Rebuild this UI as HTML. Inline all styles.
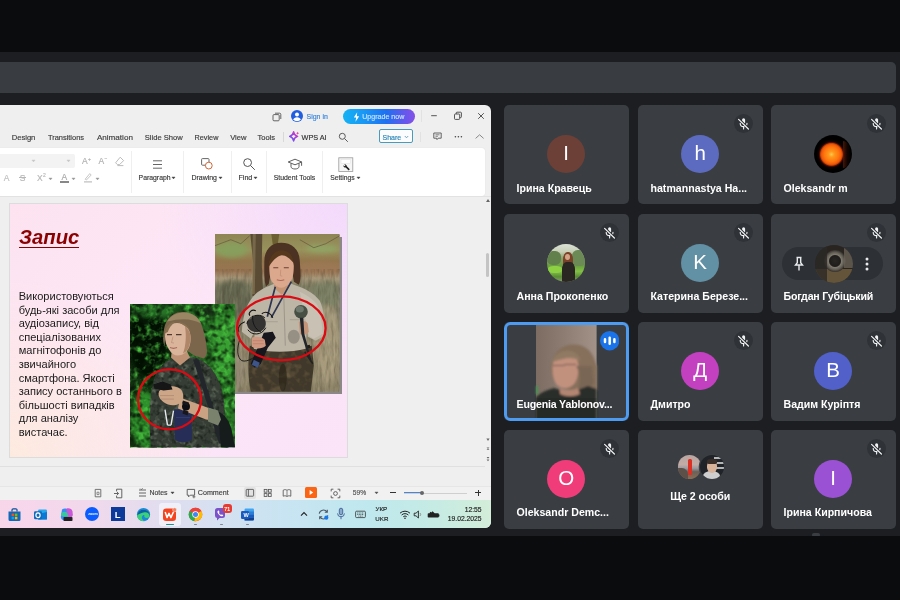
<!DOCTYPE html>
<html><head><meta charset="utf-8"><title>Meet</title>
<style>
*{box-sizing:border-box;margin:0;padding:0}
html,body{width:900px;height:600px;overflow:hidden;background:#0b0c0e;font-family:"Liberation Sans",sans-serif}
.abs,.t,.tile,svg{position:absolute}
#meet{left:0;top:52px;width:900px;height:483.5px;background:#1c1e22}
#bar{left:-10px;top:61.7px;width:906px;height:31px;background:#393d41;border-radius:5px}
.tile{will-change:transform;width:124.5px;height:99px;background:#3a3e42;border-radius:5px;overflow:hidden}
.av{position:absolute;left:43.2px;top:30px;width:38px;height:38px;border-radius:50%;color:#fff;font-size:20.5px;line-height:35.5px;text-align:center}
.nm{position:absolute;left:12.5px;top:75.7px;font-size:10.6px;line-height:13px;font-weight:bold;color:#fff;white-space:nowrap}
.mic{position:absolute;left:96px;top:9px;width:19px;height:19px}
#win{left:-6px;top:104.5px;width:496.9px;height:423px;background:#efefef;border-radius:6px;overflow:hidden}
#win .in{position:absolute;left:6px;top:-104.5px;width:900px;height:600px}
.tx{will-change:transform}
</style></head><body>
<div id="meet" class="abs"></div>
<div id="bar" class="abs"></div>
<div id="win" class="abs"><div class="in">
<div class="abs" style="left:-5px;top:147.5px;width:490px;height:48px;background:#fff;border-radius:3px;box-shadow:0 0 1px #d0d0d0"></div>
<div class="abs" style="left:-5px;top:154px;width:80px;height:13.5px;background:#f3f3f3;border-radius:2px"></div>
<svg style="left:272px;top:111.5px" width="10" height="10" viewBox="0 0 10 10"><g fill="none" stroke="#555" stroke-width=".9"><rect x="1" y="2.6" width="6.2" height="6.2" rx="1"/><path d="M3 1.2h4.6a1.2 1.2 0 0 1 1.2 1.2V7"/></g></svg>
<svg style="left:291.3px;top:110.3px" width="12" height="12" viewBox="0 0 12 12"><circle cx="6" cy="6" r="6" fill="#1f5fe0"/><circle cx="6" cy="4.6" r="2" fill="#fff"/><path d="M2.2 9.8a3.9 3.4 0 0 1 7.6 0A5.6 5.6 0 0 1 2.2 9.8z" fill="#fff"/></svg>
<div class="abs" style="left:342.5px;top:109px;width:72px;height:14.5px;border-radius:7.5px;background:linear-gradient(90deg,#14b2f4 0,#1a96f4 30%,#1e70f0 60%,#6458ec 85%,#8450e8 100%)"></div>
<svg style="left:352.5px;top:111.5px" width="7" height="10" viewBox="0 0 7 10"><path d="M4.2 .3L.8 5.4h2.3L2.5 9.7 6.2 4.3H3.8z" fill="#fff"/></svg>
<div class="abs" style="left:420.6px;top:110.0px;width:1.0px;height:12.0px;background:#e2e2e2;"></div>
<svg style="left:428px;top:110px" width="60" height="12" viewBox="0 0 60 12"><g fill="none" stroke="#444" stroke-width=".9"><path d="M3.2 5.7h5.6"/><rect x="26.5" y="4" width="5.2" height="5.4" rx=".8"/><path d="M28.2 4V3a.8.8 0 0 1 .8-.8h3.6a.8.8 0 0 1 .8.8v3.8a.8.8 0 0 1-.8.8h-.9"/><path d="M50.2 3.2l5.6 5.6M55.8 3.2l-5.6 5.6"/></g></svg>
<div class="abs" style="left:282.8px;top:131.5px;width:1.0px;height:10.0px;background:#d8d8d8;"></div>
<svg style="left:288.5px;top:131.2px" width="11" height="11" viewBox="0 0 11 11"><defs><linearGradient id="wg" x1="0" y1="1" x2="1" y2="0"><stop offset="0" stop-color="#5a5af0"/><stop offset=".55" stop-color="#a040e0"/><stop offset="1" stop-color="#f040a0"/></linearGradient></defs><path d="M4.600 .8C5 3.600 5.800 4.600 8.600 5.400 5.800 6.200 5 7.200 4.600 10 4.200 7.200 3.400 6.200 .6 5.400 3.400 4.600 4.200 3.600 4.600 .8z" fill="none" stroke="url(#wg)" stroke-width="1.500" stroke-linejoin="round"/><path d="M8.6 .6c.2 1 .5 1.4 1.6 1.7-1.1.3-1.4.7-1.6 1.7-.2-1-.5-1.4-1.6-1.7 1.1-.3 1.4-.7 1.6-1.7z" fill="#e040a0"/></svg>
<svg style="left:337.5px;top:131.5px" width="11" height="11" viewBox="0 0 11 11"><g fill="none" stroke="#5a5a5a" stroke-width="1"><circle cx="4.300" cy="4.300" r="3"/><path d="M6.600 6.600l3.200 3.200"/></g></svg>
<div class="abs" style="left:379px;top:129.3px;width:33.5px;height:14.2px;border:1px solid #4a9aba;border-radius:2px;background:#fafcfd"></div>
<svg style="left:404.2px;top:134.8px" width="5" height="4" viewBox="0 0 5 4"><path d="M.8 1L2.500 2.800 4.200 1" fill="none" stroke="#5a90b0" stroke-width=".8"/></svg>
<div class="abs" style="left:420.3px;top:131.5px;width:1.0px;height:10.0px;background:#e2e2e2;"></div>
<svg style="left:431px;top:130px" width="56" height="14" viewBox="0 0 56 14"><g fill="none" stroke="#555" stroke-width=".9"><path d="M2.8 3h7.4v5.2H7.2L6 9.6 5.6 8.2H2.8z"/><path d="M4.5 4.8h4M4.5 6.3h2.4" stroke-width=".7"/><path d="M44.6 8.4l4-3.6 4 3.6" stroke="#888" stroke-width="1"/></g><g fill="#444"><circle cx="24.4" cy="6.7" r=".8"/><circle cx="27.4" cy="6.7" r=".8"/><circle cx="30.4" cy="6.7" r=".8"/></g></svg>
<svg style="left:31.3px;top:159.0px" width="5" height="4" viewBox="0 0 5 4"><path d="M.9 1L2.5 2.900 4.100 1z" fill="#c8c8c8" stroke="#c8c8c8" stroke-width=".4" stroke-linejoin="round"/></svg>
<svg style="left:65.8px;top:159.0px" width="5" height="4" viewBox="0 0 5 4"><path d="M.9 1L2.5 2.900 4.100 1z" fill="#c8c8c8" stroke="#c8c8c8" stroke-width=".4" stroke-linejoin="round"/></svg>
<svg style="left:113.5px;top:155.5px" width="11" height="11" viewBox="0 0 11 11"><g fill="none" stroke="#b4b4b4" stroke-width=".9"><path d="M6.2 1.2l3.4 3.4-4 4H3.4L1.6 6.8z"/><path d="M3.4 9.6h6"/></g></svg>
<div class="abs" style="left:19.0px;top:177.3px;width:7.0px;height:0.8px;background:#b8b8b8;"></div>
<svg style="left:47.5px;top:176.5px" width="5" height="4" viewBox="0 0 5 4"><path d="M.9 1L2.5 2.900 4.100 1z" fill="#999" stroke="#999" stroke-width=".4" stroke-linejoin="round"/></svg>
<div class="abs" style="left:60.0px;top:181.3px;width:8.6px;height:1.6px;background:#888;"></div>
<svg style="left:70.8px;top:176.5px" width="5" height="4" viewBox="0 0 5 4"><path d="M.9 1L2.5 2.900 4.100 1z" fill="#999" stroke="#999" stroke-width=".4" stroke-linejoin="round"/></svg>
<svg style="left:82.5px;top:172px" width="11" height="11" viewBox="0 0 11 11"><g fill="none" stroke="#c0c0c0" stroke-width=".9"><path d="M2.2 7.2L6.8 1.6 8.2 3 3.4 8z"/><path d="M1 9.8h8" stroke-width="1.3"/></g></svg>
<svg style="left:94.5px;top:176.5px" width="5" height="4" viewBox="0 0 5 4"><path d="M.9 1L2.5 2.900 4.100 1z" fill="#999" stroke="#999" stroke-width=".4" stroke-linejoin="round"/></svg>
<div class="abs" style="left:131.4px;top:150.5px;width:1.0px;height:42.0px;background:#efefef;"></div>
<div class="abs" style="left:183.2px;top:150.5px;width:1.0px;height:42.0px;background:#efefef;"></div>
<div class="abs" style="left:230.5px;top:150.5px;width:1.0px;height:42.0px;background:#efefef;"></div>
<div class="abs" style="left:265.9px;top:150.5px;width:1.0px;height:42.0px;background:#efefef;"></div>
<div class="abs" style="left:322.4px;top:150.5px;width:1.0px;height:42.0px;background:#efefef;"></div>
<svg style="left:152px;top:158.5px" width="11" height="11" viewBox="0 0 11 11"><path d="M1 1.8h9M1 5.5h9M1 9.2h9" stroke="#666" stroke-width="1" fill="none"/></svg>
<svg style="left:170.9px;top:175.6px" width="5" height="4" viewBox="0 0 5 4"><path d="M.9 1L2.5 2.900 4.100 1z" fill="#444" stroke="#444" stroke-width=".4" stroke-linejoin="round"/></svg>
<svg style="left:200px;top:157px" width="14" height="14" viewBox="0 0 14 14"><g fill="none" stroke-width="1"><rect x="1.6" y="1.6" width="7.4" height="6.6" rx=".8" stroke="#666"/><circle cx="8.8" cy="8.6" r="3.4" stroke="#d06838" fill="#fff"/></g></svg>
<svg style="left:218.0px;top:175.6px" width="5" height="4" viewBox="0 0 5 4"><path d="M.9 1L2.5 2.900 4.100 1z" fill="#444" stroke="#444" stroke-width=".4" stroke-linejoin="round"/></svg>
<svg style="left:241.5px;top:157px" width="14" height="14" viewBox="0 0 14 14"><g fill="none" stroke="#555" stroke-width="1"><circle cx="5.6" cy="5.6" r="3.9"/><path d="M8.6 8.6l4.2 4.2"/></g></svg>
<svg style="left:253.0px;top:175.6px" width="5" height="4" viewBox="0 0 5 4"><path d="M.9 1L2.5 2.900 4.100 1z" fill="#444" stroke="#444" stroke-width=".4" stroke-linejoin="round"/></svg>
<svg style="left:287px;top:157.5px" width="16" height="13" viewBox="0 0 16 13"><g fill="none" stroke="#555" stroke-width=".95"><path d="M1.2 4L8 1.2 14.8 4 8 6.8z"/><path d="M4 5.4v3.4c0 1.2 1.8 2.2 4 2.2s4-1 4-2.2V5.4"/><path d="M14.6 4.2v3.6"/></g></svg>
<svg style="left:338px;top:156.5px" width="16" height="16" viewBox="0 0 16 16"><rect x=".8" y=".8" width="14" height="13.6" fill="#f6f6f6" stroke="#9a9a9a" stroke-width=".8"/><rect x="3" y="2.6" width="9.6" height="4" fill="#fff" stroke="#ddd" stroke-width=".5"/><path d="M6.2 7.4a1.9 1.9 0 0 1 2.6 1.9l3 3-1.1 1.1-3-3a1.9 1.9 0 0 1-2.3-2.2l1.2 1.1.9-.9z" fill="#222"/></svg>
<svg style="left:355.8px;top:175.6px" width="5" height="4" viewBox="0 0 5 4"><path d="M.9 1L2.5 2.900 4.100 1z" fill="#444" stroke="#444" stroke-width=".4" stroke-linejoin="round"/></svg>
<div class="abs" style="left:-5.0px;top:195.5px;width:500.0px;height:1.0px;background:#e2e2e2;"></div>
<svg style="left:484px;top:196px" width="8" height="10" viewBox="0 0 8 10"><path d="M2 6l2-3 2 3z" fill="#666"/></svg>
<div class="abs" style="left:486.0px;top:253.0px;width:3.0px;height:24.0px;background:#c4c4c4;border-radius:1.5px"></div>
<svg style="left:484px;top:435px" width="8" height="30" viewBox="0 0 8 30"><g fill="#666"><path d="M2.4 3.5h3.2L4 6z"/><path d="M2.6 12.5h2.8L4 14.3zM2.6 14.8h2.8L4 13z"/><path d="M2.6 22h2.8L4 23.8zM2.6 24.4h2.8L4 26.2z"/></g></svg>
<div class="abs" style="left:-5.0px;top:466.0px;width:490.0px;height:1.0px;background:#e0e0e0;"></div>
<svg class="tx" style="left:0;top:0" width="900" height="600"><text x="306.5" y="119.0" font-size="7.00" fill="#3a86dc" stroke="#3a86dc" stroke-width=".16">Sign in</text><text x="362.2" y="119.1" font-size="7.10" fill="#c4e2ff" stroke="#c4e2ff" stroke-width=".16">Upgrade now</text><text x="11.7" y="140.0" font-size="7.60" fill="#3c3c3c" stroke="#3c3c3c" stroke-width=".16">Design</text><text x="47.9" y="140.0" font-size="7.45" fill="#3c3c3c" stroke="#3c3c3c" stroke-width=".16">Transitions</text><text x="96.9" y="140.0" font-size="8.10" fill="#3c3c3c" stroke="#3c3c3c" stroke-width=".16">Animation</text><text x="144.8" y="140.0" font-size="7.60" fill="#3c3c3c" stroke="#3c3c3c" stroke-width=".16">Slide Show</text><text x="194.6" y="140.0" font-size="7.25" fill="#3c3c3c" stroke="#3c3c3c" stroke-width=".16">Review</text><text x="230.2" y="140.0" font-size="7.60" fill="#3c3c3c" stroke="#3c3c3c" stroke-width=".16">View</text><text x="257.5" y="140.0" font-size="7.50" fill="#3c3c3c" stroke="#3c3c3c" stroke-width=".16">Tools</text><text x="301.5" y="140.0" font-size="7.30" fill="#333" stroke="#333" stroke-width=".16">WPS AI</text><text x="382.5" y="139.6" font-size="7.00" fill="#2b86b8" stroke="#2b86b8" stroke-width=".16">Share</text><text x="82.0" y="164.0" font-size="8.50" fill="#b0b0b0" stroke="#b0b0b0" stroke-width=".16">A</text><text x="88.0" y="160.5" font-size="5.00" fill="#b0b0b0" stroke="#b0b0b0" stroke-width=".16">+</text><text x="98.5" y="164.0" font-size="8.50" fill="#b0b0b0" stroke="#b0b0b0" stroke-width=".16">A</text><text x="104.5" y="160.0" font-size="5.00" fill="#b0b0b0" stroke="#b0b0b0" stroke-width=".16">−</text><text x="3.8" y="181.0" font-size="8.50" fill="#c0c0c0" stroke="#c0c0c0" stroke-width=".16">A</text><text x="19.8" y="181.0" font-size="8.50" fill="#b8b8b8" stroke="#b8b8b8" stroke-width=".16">S</text><text x="37.0" y="181.0" font-size="8.50" fill="#b8b8b8" stroke="#b8b8b8" stroke-width=".16">X</text><text x="43.0" y="177.0" font-size="5.00" fill="#b8b8b8" stroke="#b8b8b8" stroke-width=".16">2</text><text x="61.5" y="180.0" font-size="8.50" fill="#a8a8a8" stroke="#a8a8a8" stroke-width=".16">A</text><text x="138.6" y="180.2" font-size="6.85" fill="#3a3a3a" stroke="#3a3a3a" stroke-width=".16">Paragraph</text><text x="191.5" y="180.2" font-size="6.95" fill="#3a3a3a" stroke="#3a3a3a" stroke-width=".16">Drawing</text><text x="238.5" y="180.2" font-size="7.10" fill="#3a3a3a" stroke="#3a3a3a" stroke-width=".16">Find</text><text x="273.7" y="180.2" font-size="6.90" fill="#3a3a3a" stroke="#3a3a3a" stroke-width=".16">Student Tools</text><text x="330.2" y="180.2" font-size="6.75" fill="#3a3a3a" stroke="#3a3a3a" stroke-width=".16">Settings</text></svg><div class="abs" style="left:9.6px;top:204px;width:337.6px;height:253.4px;overflow:hidden;box-shadow:0 0 0 1px #dcdcdc;background:radial-gradient(ellipse 60% 70% at 0% 100%,#fdeadf 0,rgba(253,234,223,0) 100%),radial-gradient(ellipse 55% 60% at 100% 0%,#f3dafc 0,rgba(243,218,252,0) 100%),linear-gradient(135deg,#fde3f0 0,#fde6f6 40%,#fbe5f7 70%,#fbe3f8 100%)">
</div>
<div class="abs" style="left:18.8px;top:247.0px;width:60.6px;height:1.4px;background:#8b0000;"></div>
<svg class="tx" style="left:0;top:0" width="900" height="600"><text x="19.0" y="244.0" font-size="20.25" fill="#8b0000" font-weight="bold" font-style="italic">Запис</text><text x="18.7" y="300.2" font-size="11.05" fill="#1a1a1a">Використовуються</text><text x="18.7" y="313.8" font-size="11.05" fill="#1a1a1a">будь-які засоби для</text><text x="18.7" y="327.3" font-size="11.05" fill="#1a1a1a">аудіозапису, від</text><text x="18.7" y="340.9" font-size="11.05" fill="#1a1a1a">спеціалізованих</text><text x="18.7" y="354.4" font-size="11.05" fill="#1a1a1a">магнітофонів до</text><text x="18.7" y="367.9" font-size="11.05" fill="#1a1a1a">звичайного</text><text x="18.7" y="381.5" font-size="11.05" fill="#1a1a1a">смартфона. Якості</text><text x="18.7" y="395.1" font-size="11.05" fill="#1a1a1a">запису останнього в</text><text x="18.7" y="408.6" font-size="11.05" fill="#1a1a1a">більшості випадків</text><text x="18.7" y="422.1" font-size="11.05" fill="#1a1a1a">для аналізу</text><text x="18.7" y="435.7" font-size="11.05" fill="#1a1a1a">вистачає.</text></svg><div class="abs" style="left:217.8px;top:237px;width:124.6px;height:157.3px;background:#8c8888"></div>
<svg style="left:215.2px;top:234.3px" width="124.6" height="157.5" viewBox="215.2 234.3 124.6 157.5">
<defs>
<filter id="b1" x="-20%" y="-20%" width="140%" height="140%"><feGaussianBlur stdDeviation="0.55"/></filter>
<filter id="b2" x="-30%" y="-30%" width="160%" height="160%"><feGaussianBlur stdDeviation="2.2"/></filter>
<filter id="b3" x="-30%" y="-30%" width="160%" height="160%"><feGaussianBlur stdDeviation="1.1"/></filter>
<filter id="gr" x="0" y="0" width="100%" height="100%" color-interpolation-filters="sRGB"><feTurbulence type="fractalNoise" baseFrequency="0.35 0.07" numOctaves="3" seed="4"/><feColorMatrix values="0 0 0 0 .22  0 0 0 0 .2  0 0 0 0 .13  1.4 .8 0 0 -.95"/></filter>
<filter id="gr2" x="0" y="0" width="100%" height="100%" color-interpolation-filters="sRGB"><feTurbulence type="fractalNoise" baseFrequency="0.3 0.08" numOctaves="2" seed="14"/><feColorMatrix values="0 0 0 0 .82  0 0 0 0 .78  0 0 0 0 .66  1.4 .8 0 0 -1.05"/></filter>
<filter id="cm1" x="0" y="0" width="100%" height="100%" color-interpolation-filters="sRGB"><feTurbulence type="fractalNoise" baseFrequency="0.14" numOctaves="2" seed="21"/><feColorMatrix values="0 0 0 0 .5  0 0 0 0 .43  0 0 0 0 .3  2.2 1 0 0 -1.5"/></filter>
<linearGradient id="bg1" x1="0" y1="0" x2="0" y2="1"><stop offset="0" stop-color="#8f8454"/><stop offset=".1" stop-color="#98925c"/><stop offset=".17" stop-color="#93764c"/><stop offset=".235" stop-color="#977452"/><stop offset=".28" stop-color="#a8987a"/><stop offset=".33" stop-color="#7c7c62"/><stop offset=".5" stop-color="#848068"/><stop offset=".72" stop-color="#948a70"/><stop offset="1" stop-color="#8e8468"/></linearGradient>
<clipPath id="tr"><path d="M250 346c16 4 44 4 62 0l2 20-3 26h-60c-3-14-3-32-1-46z"/></clipPath>
</defs>
<rect x="215.2" y="234.3" width="124.6" height="157.6" fill="url(#bg1)"/>
<g filter="url(#b2)">
<ellipse cx="232" cy="250" rx="16" ry="8" fill="#86a05c" opacity=".9"/>
<ellipse cx="322" cy="249" rx="16" ry="4" fill="#8ea866" opacity=".8"/>
<ellipse cx="320" cy="268" rx="22" ry="6" fill="#a07a58" opacity=".6"/>
<ellipse cx="234" cy="300" rx="18" ry="20" fill="#62634e" opacity=".85"/>
<ellipse cx="326" cy="296" rx="14" ry="14" fill="#7c8266" opacity=".8"/>
<ellipse cx="328" cy="345" rx="12" ry="40" fill="#aa9c7e" opacity=".9"/>
<ellipse cx="232" cy="372" rx="14" ry="20" fill="#948a74" opacity=".8"/>
<ellipse cx="226" cy="340" rx="8" ry="18" fill="#6e6a56" opacity=".6"/>
</g>
<rect x="215.2" y="270" width="124.6" height="122" filter="url(#gr)" opacity=".42"/>
<rect x="215.2" y="280" width="124.6" height="112" filter="url(#gr2)" opacity=".28"/>
<g filter="url(#b1)">
<path d="M250.500 234.300h12l-.500 30 1.500 32h-11l1-32z" fill="#5a4c36"/>
<path d="M253 234.300h3l-1 60h-3z" fill="#8a7a58" opacity=".6"/>
<path d="M271.500 234.300h8l-1.500 10-5 1z" fill="#6c6030"/>
<path d="M215 246l16-6 10 4 9-8M300 240l14 8 12-4 14-8" stroke="#5a4a30" stroke-width=".8" fill="none" opacity=".7"/>
<!-- trousers -->
<path d="M250 346c16 4 44 4 62 0l2 20-3 26h-60c-3-14-3-32-1-46z" fill="#40382a"/>
<g clip-path="url(#tr)"><rect x="245" y="340" width="75" height="55" filter="url(#cm1)" opacity=".6"/><ellipse cx="283" cy="378" rx="4" ry="14" fill="#2c261a" opacity=".7"/></g>
<path d="M252 345c16 4 42 4 58 0l.500 3c-16 4-42 4-58.500 0z" fill="#221e18"/>
<!-- shirt -->
<path d="M272 285c6-3 16-3 22 0 10 3 20 8 26 16 4 8 5 22 6 34l-10 6-8-4-1-10-1 22c-14 4-38 4-52 0l1-18-4 8-9-7c1-12 3-24 9-32 5-8 13-12 21-15z" fill="#bdb5a6"/>
<path d="M300 292c8 4 14 8 18 14 3 8 4 18 5 28l-9 5-5-3z" fill="#c9c2b4"/>
<path d="M284 296l1.500 50" stroke="#9a9286" stroke-width=".9" fill="none"/>
<ellipse cx="294" cy="337" rx="6" ry="7" fill="#8a8478" opacity=".75"/>
<path d="M264 322h14M290 320h14" stroke="#a39b8e" stroke-width=".8"/>
<!-- hair -->
<path d="M264.500 262c0-12 7-19 17-19s18 6 18.500 18c.500 10 2 18-1 24l-5-3-2-14h-20l-3 16-3 3c-2-8-1.500-16-1.500-25z" fill="#4c3220"/>
<!-- neck/face -->
<path d="M275 280h13l1 8-7 7-8-7z" fill="#c49474"/>
<path d="M269.500 266c0-8 5-12 12-12s12 4 12.500 12c0 8-1 13-4 17-3 3.500-6 5-8.500 5s-6-1.500-8.500-5c-3-4-3.500-9-3.500-17z" fill="#dba88e"/>
<path d="M268.500 268c1-12 6-17 13-17.500 7 0 12 5 12.500 13-4-5-8-8-12-8-5 1-9 5-13.500 12.500z" fill="#56381f"/>
<path d="M273.500 268h5M284 268h5" stroke="#6a4030" stroke-width="1.100"/>
<path d="M277 280q4 1.500 7.500 0" stroke="#b06858" stroke-width="1.100" fill="none"/>
<path d="M281 270l-.500 6 2 .5" stroke="#c08a70" stroke-width=".7" fill="none"/>
<!-- lanyard -->
<path d="M275.500 287l-8 30M291.500 282l-20 36" stroke="#2e3650" stroke-width="1.700" fill="none"/>
<!-- right hand + mic -->
<path d="M299 322c3-1 8-1 9 2l1 8c-1 3-7 4-9 2z" fill="#c49478"/>
<circle cx="301.200" cy="312" r="6.800" fill="#465044"/><ellipse cx="300" cy="309.500" rx="4" ry="3.200" fill="#6e786c"/>
<path d="M300 318h3.500l1 16 7 26h-2l-8-26z" fill="#24262a"/>
<!-- cables / camera -->
<path d="M251 319c3-4 10-5 13-1s3 10-2 13-12 1-14-4 0-6 3-8z" fill="#1c1c1c" opacity=".85"/><path d="M247 324c2-8 12-11 18-6M248 330c4 6 14 6 18-2M253 316c-1 6 2 14 8 16" stroke="#151515" stroke-width="1" fill="none"/>
<path d="M245 322c-5 2-8 6-6 10M262 314c4-3 9-1 11 4M250 316c-2-3 2-7 6-5" stroke="#151515" stroke-width="1.100" fill="none"/>
<path d="M240 340c-3 8-3 18 2 21 6 2 14-4 24-12" stroke="#1a1a1a" stroke-width=".9" fill="none"/>
<path d="M264 333l9-1 3 6-8 10-7 16-6 4-4-4 6-14z" fill="#15161a"/>
<path d="M254 360l6 3-2 5-6-3z" fill="#3c5488"/>
<path d="M252 338c4-2 10-1 13 2l1 6c-3 3-10 4-14 1z" fill="#d09880"/>
<path d="M253 341h11M253 344h11" stroke="#b87860" stroke-width=".6"/>
<path d="M305 352l8 12" stroke="#202020" stroke-width="1.600"/>
</g>
</svg>
<svg style="left:130px;top:304.400px" width="105.300" height="143.200" viewBox="130 304.400 105.300 143.200">
<defs>
<filter id="lf" x="0" y="0" width="100%" height="100%" color-interpolation-filters="sRGB"><feTurbulence type="fractalNoise" baseFrequency="0.13" numOctaves="3" seed="9"/><feColorMatrix values="0 0 0 0 .3  0 0 0 0 .78  0 0 0 0 .26  2.4 1.6 0 0 -1.9"/></filter>
<filter id="lf2" x="0" y="0" width="100%" height="100%" color-interpolation-filters="sRGB"><feTurbulence type="fractalNoise" baseFrequency="0.16" numOctaves="2" seed="3"/><feColorMatrix values="0 0 0 0 .03  0 0 0 0 .09  0 0 0 0 .03  2.4 1.4 0 0 -1.7"/></filter>
<filter id="cam" x="0" y="0" width="100%" height="100%" color-interpolation-filters="sRGB"><feTurbulence type="fractalNoise" baseFrequency="0.17" numOctaves="2" seed="12"/><feColorMatrix values="0 0 0 0 .56  0 0 0 0 .6  0 0 0 0 .52  2.6 1.2 0 0 -1.95"/></filter>
<filter id="cam2" x="0" y="0" width="100%" height="100%" color-interpolation-filters="sRGB"><feTurbulence type="fractalNoise" baseFrequency="0.2" numOctaves="2" seed="31"/><feColorMatrix values="0 0 0 0 .08  0 0 0 0 .1  0 0 0 0 .08  2.6 1.2 0 0 -1.9"/></filter>
<linearGradient id="bg2" x1="0" y1="0" x2="1" y2="0"><stop offset="0" stop-color="#12300f"/><stop offset=".3" stop-color="#143812"/><stop offset=".6" stop-color="#1f5a1c"/><stop offset="1" stop-color="#2a7a26"/></linearGradient>
<clipPath id="jk"><path d="M154 380c3-10 10-18 20-22l8-2 14 2c10 4 18 12 23 24 4 10 6 24 6 40v25.600h-74c-1-10-2-20-1-32 0-14 1-26 4-35.600z"/></clipPath>
</defs>
<rect x="130" y="304.400" width="105.300" height="143.200" fill="url(#bg2)"/>
<g filter="url(#b2)">
<ellipse cx="148" cy="342" rx="20" ry="36" fill="#040c04" opacity=".95"/>
<ellipse cx="224" cy="345" rx="12" ry="40" fill="#3cae36" opacity=".75"/>
<ellipse cx="145" cy="420" rx="14" ry="28" fill="#32a02e" opacity=".85"/>
<ellipse cx="155" cy="312" rx="20" ry="6" fill="#2c8a30" opacity=".7"/>
<ellipse cx="212" cy="312" rx="14" ry="6" fill="#0c200c" opacity=".7"/>
</g>
<rect x="130" y="304.400" width="105.300" height="143.200" filter="url(#lf)"/>
<rect x="130" y="304.400" width="105.300" height="143.200" filter="url(#lf2)" opacity=".85"/>
<g filter="url(#b1)">
<!-- jacket -->
<path d="M154 380c3-10 10-18 20-22l8-2 14 2c10 4 18 12 23 24 4 10 6 24 6 40v25.600h-74c-1-10-2-20-1-32 0-14 1-26 4-35.600z" fill="#363e36"/>
<g clip-path="url(#jk)"><rect x="130" y="350" width="105.300" height="98" filter="url(#cam)" opacity=".6"/><rect x="130" y="350" width="105.300" height="98" filter="url(#cam2)" opacity=".9"/></g>
<!-- strap/bag right -->
<path d="M193 360l8 24 18 60h6l-20-62-6-22z" fill="#20262a"/>
<path d="M218 412c6 2 12 10 14 20l3 15.600h-14z" fill="#161c1c"/>
<!-- hair -->
<path d="M163.500 338c-.5-12 4-22 14-25 10-2.500 20 2 24 12 3 9 5 17 5.500 26 0 3-1 6-3 8l-10-3-7-5-2-16-16-8c-3 3-4 8-4 14l-.5 6c-1-3-1.500-6-1.500-9z" fill="#7c664c"/>
<path d="M167 322c4-6 10-9 17-9 8 0 14 4 17 11-8-5-20-6-34-2z" fill="#9a8664"/>
<!-- face / neck -->
<path d="M172 350l14 0 4 8-10 8-9-8z" fill="#bd9274"/>
<path d="M165 337c0-8 5-13.500 12-13.500s13 5 13.500 13c.5 7-1 12-4 15.500-3 3-6 4-9 4s-6-2-8.500-6c-2.500-4-4-8-4-13z" fill="#dbb49c"/>
<path d="M185 327c3.500 3 5.500 6 5.500 10 0 7-1.500 12-4.500 15l-3 2c3-8 3.500-18 2-27z" fill="#b08668"/>
<path d="M164.800 334c1-7 5-11 10-11.500-3 3-6 6-7 10zM178 322.500c6 0 10.500 4 12.500 9-4-4-8-7-12.500-9z" fill="#86704f"/>
<path d="M167 335h5M176 335h5.500" stroke="#4e3a30" stroke-width="1.100"/>
<path d="M170 348q3.500 1.500 7 0" stroke="#a8685c" stroke-width="1.100" fill="none"/>
<path d="M173 337l-1.500 6 2.500.5" stroke="#b88a72" stroke-width=".7" fill="none"/>
<!-- pouch -->
<path d="M174 410h17.500l.5 30c-4 3.500-13 3.500-17 0z" fill="#262e58"/>
<path d="M176 418h14" stroke="#3a447a" stroke-width=".7"/>
<path d="M165 410l2.500 15.500M173.500 411l-2.500 14.500M167.500 425.500h3.500" stroke="#e6eaf0" stroke-width="1.400" fill="none"/>
<!-- forearm, cuff -->
<path d="M180 398l30 11 6 4-2 8-8-1-28-11z" fill="#c9a284"/>
<path d="M208 408l10 3 3 9-3 6-10-4z" fill="#7a826e"/>
<!-- hand, device, watch -->
<path d="M159 392c3-5 12-7 19-4 5 2 6 8 5 12-2 5-9 7-15 5-6-2-11-8-9-13z" fill="#cda688"/>
<path d="M160 396h14M161 399.500h13" stroke="#a87e64" stroke-width=".6"/>
<path d="M153.500 385l9-3 8 3 2 5-9 1-9-2z" fill="#121316"/>
<circle cx="186" cy="407" r="4" fill="#0f1012"/><path d="M183 401l6 2-1 3-6-2zM183.500 410l5 2-1 4-5-2z" fill="#16181a"/>
</g>
</svg>
<svg style="left:120px;top:285px" width="230" height="160" viewBox="120 285 230 160"><g fill="none" stroke="#dc0a12" stroke-width="2.300"><ellipse cx="281.300" cy="328.300" rx="44.300" ry="32"/><ellipse cx="169.500" cy="399.300" rx="31.500" ry="30"/></g></svg><div class="abs" style="left:-5.0px;top:485.5px;width:500.0px;height:15.0px;background:#f1f1f1;border-top:1px solid #e6e6e6"></div>
<svg style="left:93px;top:488px" width="10" height="10" viewBox="0 0 10 10"><g fill="none" stroke="#666" stroke-width=".9"><path d="M2.200 1.400h5.600v7.400H2.200z"/><path d="M4 4.200h2v2.400H4z" stroke-width=".7"/></g></svg>
<svg style="left:113px;top:487.500px" width="11" height="11" viewBox="0 0 11 11"><g fill="none" stroke="#555" stroke-width=".9"><path d="M3.600 1.200h5.200v8.600H3.600V7.600M3.600 3.400V1.200"/><path d="M1 5.500h4.400M4 4l1.600 1.500L4 7"/></g></svg>
<svg style="left:138px;top:488px" width="9" height="10" viewBox="0 0 9 10"><g fill="none" stroke="#555" stroke-width=".9"><path d="M1 2h7M1 5h7M1 8h7"/><path d="M2.200 .6l1 1 1.600-1.400" stroke-width=".7"/></g></svg>
<svg style="left:169.7px;top:491.0px" width="5" height="4" viewBox="0 0 5 4"><path d="M.9 1L2.5 2.900 4.100 1z" fill="#444" stroke="#444" stroke-width=".4" stroke-linejoin="round"/></svg>
<svg style="left:185.500px;top:487.500px" width="10" height="11" viewBox="0 0 10 11"><g fill="none" stroke="#555" stroke-width=".9"><path d="M1.200 1.400h7.400v5.800H4.200L2.600 8.800V7.200H1.200z"/><path d="M6.400 8.800h3M7.900 7.300v3" stroke-width=".8"/></g></svg>
<div class="abs" style="left:244.0px;top:487.0px;width:11.5px;height:11.5px;background:#e2e2e2;border-radius:2px"></div>
<svg style="left:245px;top:488px" width="50" height="10" viewBox="0 0 50 10"><g fill="none" stroke="#555" stroke-width=".85"><rect x="1.200" y="1.400" width="7.400" height="6.800" rx=".6"/><path d="M3.400 1.400v6.800"/><rect x="19.200" y="1.400" width="2.800" height="2.800"/><rect x="23.400" y="1.400" width="2.800" height="2.800"/><rect x="19.200" y="5.600" width="2.800" height="2.800"/><rect x="23.400" y="5.600" width="2.800" height="2.800"/><path d="M38.200 2.200c1.400-.8 2.800-.8 3.800.2 1-1 2.400-1 3.800-.2v6c-1.400-.6-2.800-.6-3.800.4-1-1-2.400-1-3.800-.4z"/><path d="M42 2.400v6" stroke-width=".7"/></g></svg>
<div class="abs" style="left:304.800px;top:487.300px;width:12px;height:11px;background:#fa6414;border-radius:1.500px"></div>
<svg style="left:304.800px;top:487.300px" width="12" height="11" viewBox="0 0 12 11"><path d="M4.600 3l3.600 2.500-3.600 2.500z" fill="#fff"/></svg>
<svg style="left:329.500px;top:487.500px" width="11" height="11" viewBox="0 0 11 11"><g fill="none" stroke="#555" stroke-width=".9"><path d="M1.200 3.400V1.200h2.200M7.600 1.200h2.200v2.200M9.800 7.600v2.200H7.600M3.400 9.800H1.200V7.600"/><circle cx="5.500" cy="5.500" r="1.900"/></g></svg>
<svg style="left:374.2px;top:491.0px" width="5" height="4" viewBox="0 0 5 4"><path d="M.9 1L2.5 2.900 4.100 1z" fill="#555" stroke="#555" stroke-width=".4" stroke-linejoin="round"/></svg>
<div class="abs" style="left:389.7px;top:492.3px;width:6.0px;height:1.1px;background:#333;"></div>
<div class="abs" style="left:404.4px;top:492.5px;width:62.3px;height:0.8px;background:#cfcfcf;"></div>
<div class="abs" style="left:404.4px;top:492.3px;width:17.0px;height:1.0px;background:#4a86d8;"></div>
<div class="abs" style="left:420.200px;top:490.800px;width:4px;height:4px;border-radius:50%;background:#666"></div>
<div class="abs" style="left:475.3px;top:492.3px;width:6.0px;height:1.1px;background:#333;"></div>
<div class="abs" style="left:477.8px;top:489.8px;width:1.1px;height:6.0px;background:#333;"></div>
<div class="abs" style="left:-5.0px;top:500.3px;width:500.0px;height:27.5px;background:linear-gradient(90deg,#f8d6ea 0,#f2d8ec 18%,#dcdff0 38%,#c8e4f2 58%,#bfe8ee 75%,#c6ebe4 88%,#d4eed8 100%);"></div>
<svg style="left:6.7px;top:506.5px" width="15" height="15" viewBox="0 0 15 15"><path d="M1.500 4.500h12v8a1.500 1.500 0 0 1-1.500 1.500H3a1.500 1.500 0 0 1-1.500-1.500z" fill="#1468b8"/><path d="M5 4.500V3a1.200 1.200 0 0 1 1.200-1.200h2.600A1.200 1.200 0 0 1 10 3v1.500" fill="none" stroke="#0c4f94" stroke-width="1.200"/><rect x="4.600" y="6.600" width="2.500" height="2.500" fill="#f25022"/><rect x="7.900" y="6.600" width="2.500" height="2.500" fill="#7fba00"/><rect x="4.600" y="9.800" width="2.500" height="2.500" fill="#00a4ef"/><rect x="7.900" y="9.800" width="2.500" height="2.500" fill="#ffb900"/></svg>
<svg style="left:32.8px;top:506.5px" width="15" height="15" viewBox="0 0 15 15"><rect x="5" y="2.500" width="9" height="10" rx="1.200" fill="#28a8ea"/><path d="M5 7l9-2v7.500H5z" fill="#0a78d4"/><rect x="1" y="4.200" width="8" height="8" rx="1.200" fill="#0f6cbd"/><ellipse cx="5" cy="8.200" rx="2.100" ry="2.400" fill="none" stroke="#fff" stroke-width="1.200"/></svg>
<svg style="left:59.2px;top:506.5px" width="15" height="15" viewBox="0 0 15 15"><path d="M3 2.500c2-1.500 5-1.500 6 1l2.500 6c.8 2-1 3.800-3 3.800H5.500c-2.500 0-4.200-2-3.500-4.500z" fill="#3a8ef0"/><path d="M7.500 1.500c2.500-.8 5.500.2 6 3l.3 3c.2 2-1.800 3.500-3.800 3.500H8z" fill="#c858d8"/><path d="M2 7c1-2.500 4-3 6-1.500l1.500 4H4.500C2.800 9.500 1.600 8.500 2 7z" fill="#38c8a0"/><rect x="4.500" y="10" width="9" height="4" rx=".8" fill="#222"/></svg>
<div class="abs" style="left:84.700px;top:506.700px;width:14.600px;height:14.600px;border-radius:50%;background:#0b5cff"></div>
<div class="abs" style="left:110.9px;top:507.0px;width:14.0px;height:14.0px;background:#0c3a9a;"></div>
<svg style="left:136.4px;top:506.5px" width="15" height="15" viewBox="0 0 15 15"><circle cx="7.500" cy="7.500" r="6.600" fill="#1a88d8"/><path d="M1.200 8.500C2 4 5 2.500 8 2.800c3.500.3 5.800 2.800 5.800 5.400 0 1.800-1.400 2.800-3 2.800-1.500 0-2.600-.8-2.600-2 0-.8.400-1.300.4-1.300-2 0-3.200 1.800-2.600 3.800.5 1.600 2 2.600 3.200 2.700C5 14.500 1 12.500 1.200 8.500z" fill="#3cd078"/><path d="M1.200 8.500C2 4 5 2.500 8 2.800c3.500.3 5.800 2.800 5.800 5.400 0 .5-.1.900-.3 1.300.3-3-2.500-4.500-5-4.200C5.500 5.600 3 7 1.200 8.500z" fill="#0c5ea8"/></svg>
<div class="abs" style="left:159.0px;top:503.0px;width:21.5px;height:23.0px;background:rgba(255,255,255,.55);border-radius:3px"></div>
<svg style="left:162.2px;top:506.5px" width="15" height="15" viewBox="0 0 15 15"><rect x="1" y="1.500" width="13" height="12.500" rx="3.200" fill="#f4431e"/><path d="M3.200 5l1.800 5.600L7 6.400l1.900 4.200L11.400 5" fill="none" stroke="#fff" stroke-width="1.500" stroke-linejoin="round"/><circle cx="12.600" cy="2.800" r="2" fill="#f08060" stroke="#fff" stroke-width=".4"/></svg>
<div class="abs" style="left:165.7px;top:524.0px;width:8.0px;height:1.3px;background:#1f8f8f;border-radius:1px"></div>
<svg style="left:187.8px;top:506.5px" width="15" height="15" viewBox="0 0 15 15"><circle cx="7.500" cy="7.500" r="6.800" fill="#e8453c"/><path d="M7.500 7.500L1.600 4.100A6.800 6.800 0 0 0 6.400 14.200z" fill="#2da94f"/><path d="M7.500 7.500L6.400 14.200A6.800 6.800 0 0 0 13.400 4.100z" fill="#fbbc05"/><path d="M1.600 4.100A6.800 6.800 0 0 1 13.400 4.100H7.500z" fill="#e8453c"/><circle cx="7.500" cy="7.500" r="3.200" fill="#fff"/><circle cx="7.500" cy="7.500" r="2.500" fill="#4285f4"/></svg>
<div class="abs" style="left:194.0px;top:524.3px;width:2.8px;height:1.0px;background:#808890;border-radius:1px"></div>
<svg style="left:213.0px;top:506.5px" width="15" height="15" viewBox="0 0 15 15"><path d="M2 3.500A2.500 2.500 0 0 1 4.500 1h5A2.500 2.500 0 0 1 12 3.500v5A2.500 2.500 0 0 1 9.500 11H6.500L4 13.500V11A2.500 2.500 0 0 1 2 8.500z" fill="#7b52c8"/><path d="M5 3.800c.4-.4.9-.2 1.100.3l.3.900c.1.400-.2.600-.4.900.4.900 1 1.500 1.900 1.900.3-.2.500-.5.900-.4l.9.300c.5.200.7.700.3 1.100-.5.600-1.200.7-2 .4C6.400 8.500 5 7.100 4.500 5.600c-.2-.7-.1-1.300.5-1.800z" fill="#fff"/></svg>
<div class="abs" style="left:222.500px;top:504.300px;width:9px;height:8.600px;border-radius:3px;background:#e83a30"></div>
<div class="abs" style="left:220.3px;top:524.3px;width:2.8px;height:1.0px;background:#808890;border-radius:1px"></div>
<svg style="left:239.8px;top:506.5px" width="15" height="15" viewBox="0 0 15 15"><rect x="4.500" y="1.500" width="9.500" height="12" rx="1.200" fill="#41a5ee"/><rect x="4.500" y="4.500" width="9.500" height="3" fill="#2b7cd3"/><rect x="4.500" y="7.500" width="9.500" height="3" fill="#185abd"/><path d="M4.500 10.500h9.500v1.800a1.200 1.200 0 0 1-1.200 1.200H4.500z" fill="#103f91"/><rect x="1" y="4" width="8" height="8" rx="1.200" fill="#185abd"/></svg>
<div class="abs" style="left:246.0px;top:524.3px;width:2.8px;height:1.0px;background:#808890;border-radius:1px"></div>
<svg style="left:299.600px;top:510.500px" width="8" height="6" viewBox="0 0 8 6"><path d="M1 4.600L4 1.600l3 3" fill="none" stroke="#222" stroke-width="1.100"/></svg>
<svg style="left:316.500px;top:507.500px" width="13" height="13" viewBox="0 0 13 13"><g fill="none" stroke="#4a5868" stroke-width="1.100"><path d="M2.200 5.600A4.300 4.300 0 0 1 10 4M10.300 1.800V4.300H7.800"/><path d="M10.800 7.400A4.300 4.300 0 0 1 3 9M2.700 11.200V8.700h2.500"/></g><circle cx="9.300" cy="9.700" r="2.100" fill="#1878e8"/></svg>
<svg style="left:336px;top:507px" width="10" height="14" viewBox="0 0 10 14"><g fill="none" stroke="#4a6a9a" stroke-width="1"><rect x="3.300" y="1.200" width="3.400" height="6.600" rx="1.700" fill="#8aa8cc"/><path d="M1.600 6.400a3.400 3.400 0 0 0 6.800 0M5 9.800v2.400"/></g></svg>
<svg style="left:354.500px;top:509.500px" width="11" height="9" viewBox="0 0 11 9"><g fill="none" stroke="#333" stroke-width=".8"><rect x=".6" y="1.200" width="9.800" height="6.400" rx="1"/><path d="M2.200 3h6.600M2.200 4.500h6.600M3.400 6.100h4.200" stroke-width=".7" stroke-dasharray="1 .6"/></g></svg>
<svg style="left:398.500px;top:508.500px" width="12" height="11" viewBox="0 0 12 11"><g fill="none" stroke="#222" stroke-width="1"><path d="M1 4.200a7.200 7.200 0 0 1 10 0M2.600 6a4.900 4.900 0 0 1 6.800 0M4.300 7.700a2.500 2.500 0 0 1 3.400 0"/></g><circle cx="6" cy="9.300" r=".8" fill="#222"/></svg>
<svg style="left:412.500px;top:508.500px" width="11" height="11" viewBox="0 0 11 11"><g fill="none" stroke="#222" stroke-width=".9"><path d="M1.200 4.200h1.800L5.400 2v7L3 6.800H1.200z"/><path d="M7 4a2.200 2.200 0 0 1 0 3" stroke="#888"/></g></svg>
<svg style="left:426.500px;top:508.500px" width="13" height="11" viewBox="0 0 13 11"><path d="M1.500 4.200h1l.8-1.400 1 .6 1.200-1.200 2.200 2h3.300a.8.800 0 0 1 .8.800v.4h.6v2h-.6v.400a.8.800 0 0 1-.8.800H1.500a.8.800 0 0 1-.8-.8V5a.8.800 0 0 1 .8-.8z" fill="#222"/></svg>
<svg class="tx" style="left:0;top:0" width="900" height="600"><text x="149.4" y="495.3" font-size="6.95" fill="#444" stroke="#444" stroke-width=".16">Notes</text><text x="197.8" y="495.3" font-size="7.15" fill="#444" stroke="#444" stroke-width=".16">Comment</text><text x="352.8" y="495.3" font-size="6.70" fill="#555" stroke="#555" stroke-width=".16">59%</text><text x="62.0" y="515.0" font-size="3.00" fill="#fff" stroke="#fff" stroke-width=".16"></text><text x="88.3" y="515.0" font-size="3.60" fill="#fff" font-weight="bold">zoom</text><text x="114.7" y="517.6" font-size="9.50" fill="#fff" font-weight="bold">L</text><text x="224.3" y="510.8" font-size="5.20" fill="#fff" stroke="#fff" stroke-width=".16">71</text><text x="243.4" y="517.0" font-size="5.60" fill="#fff" font-weight="bold">W</text><text x="375.5" y="511.3" font-size="6.20" fill="#222" stroke="#222" stroke-width=".16">УКР</text><text x="375.3" y="520.7" font-size="6.20" fill="#222" stroke="#222" stroke-width=".16">UKR</text><text x="481.6" y="511.8" font-size="6.75" fill="#222" text-anchor="end" stroke="#222" stroke-width=".16">12:55</text><text x="481.6" y="521.2" font-size="6.75" fill="#222" text-anchor="end" stroke="#222" stroke-width=".16">19.02.2025</text></svg>
</div></div>
<div class="tile" style="left:504.0px;top:105.0px;"><div class="av" style="background:#6d4037">I</div><div class="nm" style="top:76.7px">Ірина Кравець</div></div>
<div class="tile" style="left:638.0px;top:105.0px;"><div class="av" style="background:#5c6bc0">h</div><svg class="mic" viewBox="0 0 19 19"><circle cx="9.5" cy="9.5" r="9.5" fill="#2f3237"/><rect x="8.100" y="4.200" width="3" height="6" rx="1.500" fill="#f1f3f4"/><g fill="none" stroke="#f1f3f4" stroke-width="1.100" stroke-linecap="round"><path d="M6.200 9.200a3.400 3.400 0 0 0 6.800 0"/><path d="M9.600 12.800v2.200"/></g><path d="M4.300 4.600l10.300 10.200" stroke="#2c2f33" stroke-width="2.600"/><path d="M4.600 5.400l9.800 9.600" stroke="#f1f3f4" stroke-width="1.200" stroke-linecap="round"/></svg><div class="nm" style="top:76.7px">hatmannastya На...</div></div>
<div class="tile" style="left:771.3px;top:105.0px;"><div class="av" style="background:radial-gradient(circle 19px at 46% 51%,#ffc850 0,#ff9a1c 14%,#ff760e 38%,#f05a08 52%,#c63c04 58%,#5a1602 62%,#120401 68%,#000 80%)"></div><div class="abs" style="left:71.500px;top:36px;width:8px;height:27px;border-radius:0 100% 100% 0/0 50% 50% 0;background:linear-gradient(90deg,rgba(100,30,10,.7) 0,rgba(50,14,6,.35) 50%,rgba(30,8,4,0) 100%)"></div><svg class="mic" viewBox="0 0 19 19"><circle cx="9.5" cy="9.5" r="9.5" fill="#2f3237"/><rect x="8.100" y="4.200" width="3" height="6" rx="1.500" fill="#f1f3f4"/><g fill="none" stroke="#f1f3f4" stroke-width="1.100" stroke-linecap="round"><path d="M6.200 9.200a3.400 3.400 0 0 0 6.800 0"/><path d="M9.600 12.800v2.200"/></g><path d="M4.300 4.600l10.300 10.200" stroke="#2c2f33" stroke-width="2.600"/><path d="M4.600 5.400l9.800 9.600" stroke="#f1f3f4" stroke-width="1.200" stroke-linecap="round"/></svg><div class="nm" style="top:76.7px">Oleksandr m</div></div>
<div class="tile" style="left:504.0px;top:214.0px;"><div class="av" style="overflow:hidden;background:linear-gradient(180deg,#dde2d6 0,#c8d0b8 20%,#86a068 38%,#6aa040 58%,#84c048 72%,#5a8e34 86%,#8a9a70 100%)"><div class="abs" style="left:0;top:7px;width:14px;height:14px;background:#62804c;border-radius:40%"></div><div class="abs" style="left:25px;top:6px;width:14px;height:16px;background:#6c8a56;border-radius:40%"></div><div class="abs" style="left:1px;top:22px;width:14px;height:7px;background:#8ed044;border-radius:40%"></div><div class="abs" style="left:15.500px;top:7.500px;width:10px;height:17px;border-radius:45% 45% 30% 30%;background:#7a4228"></div><div class="abs" style="left:18px;top:9.500px;width:5px;height:6px;border-radius:50%;background:#d4a488"></div><div class="abs" style="left:14.500px;top:18px;width:13px;height:21px;border-radius:35% 35% 0 0;background:#2a2622"></div></div><svg class="mic" viewBox="0 0 19 19"><circle cx="9.5" cy="9.5" r="9.5" fill="#2f3237"/><rect x="8.100" y="4.200" width="3" height="6" rx="1.500" fill="#f1f3f4"/><g fill="none" stroke="#f1f3f4" stroke-width="1.100" stroke-linecap="round"><path d="M6.200 9.200a3.400 3.400 0 0 0 6.800 0"/><path d="M9.600 12.800v2.200"/></g><path d="M4.300 4.600l10.300 10.200" stroke="#2c2f33" stroke-width="2.600"/><path d="M4.600 5.400l9.800 9.600" stroke="#f1f3f4" stroke-width="1.200" stroke-linecap="round"/></svg><div class="nm">Анна Прокопенко</div></div>
<div class="tile" style="left:638.0px;top:214.0px;"><div class="av" style="background:#6290a4">K</div><svg class="mic" viewBox="0 0 19 19"><circle cx="9.5" cy="9.5" r="9.5" fill="#2f3237"/><rect x="8.100" y="4.200" width="3" height="6" rx="1.500" fill="#f1f3f4"/><g fill="none" stroke="#f1f3f4" stroke-width="1.100" stroke-linecap="round"><path d="M6.200 9.200a3.400 3.400 0 0 0 6.800 0"/><path d="M9.600 12.800v2.200"/></g><path d="M4.300 4.600l10.300 10.200" stroke="#2c2f33" stroke-width="2.600"/><path d="M4.600 5.400l9.800 9.600" stroke="#f1f3f4" stroke-width="1.200" stroke-linecap="round"/></svg><div class="nm">Катерина Березе...</div></div>
<div class="tile" style="left:771.3px;top:214.0px;"><div class="abs" style="left:10.7px;top:32.6px;width:101.5px;height:33.4px;border-radius:16.7px;background:#2d3034"></div><div class="abs" style="left:43.5px;top:30.7px;width:38px;height:38px;border-radius:50%;overflow:hidden;background:#3a322c;filter:brightness(.72)"><div class="abs" style="left:0;top:24px;width:38px;height:14px;background:#8a7450"></div><div class="abs" style="left:9px;top:5px;width:22px;height:22px;border-radius:50%;background:radial-gradient(circle,#3a3632 0,#2a2826 35%,#b0a898 42%,#8a8478 55%,#4a443e 70%)"></div><div class="abs" style="left:0;top:0;width:12px;height:38px;background:#3c3834;opacity:.8"></div><div class="abs" style="left:29px;top:3px;width:9px;height:20px;background:#9a9082;opacity:.7"></div></div><svg style="left:22.3px;top:42px" width="12" height="16" viewBox="0 0 12 16"><g fill="none" stroke="#e8eaed" stroke-width="1.4"><path d="M3.5 1.5h5M4.3 1.5v5.2L2.5 9h7L7.700 6.700V1.500M6 9v5.500"/></g></svg><svg style="left:92.700px;top:41.800px" width="6" height="16" viewBox="0 0 6 16"><g fill="#e8eaed"><circle cx="3" cy="3" r="1.500"/><circle cx="3" cy="8" r="1.500"/><circle cx="3" cy="13" r="1.500"/></g></svg><svg class="mic" viewBox="0 0 19 19"><circle cx="9.5" cy="9.5" r="9.5" fill="#2f3237"/><rect x="8.100" y="4.200" width="3" height="6" rx="1.500" fill="#f1f3f4"/><g fill="none" stroke="#f1f3f4" stroke-width="1.100" stroke-linecap="round"><path d="M6.200 9.200a3.400 3.400 0 0 0 6.800 0"/><path d="M9.600 12.800v2.200"/></g><path d="M4.300 4.600l10.300 10.200" stroke="#2c2f33" stroke-width="2.600"/><path d="M4.600 5.400l9.800 9.600" stroke="#f1f3f4" stroke-width="1.200" stroke-linecap="round"/></svg><div class="nm" style="letter-spacing:-0.17px">Богдан Губіцький</div></div>
<div class="tile" style="left:504.0px;top:322.0px;"><svg style="left:0;top:0" width="124.5" height="99" viewBox="504 322 124.5 99"><defs><linearGradient id="vw" x1="0" y1="0" x2="1" y2="0"><stop offset="0" stop-color="#7c6c62"/><stop offset=".45" stop-color="#8c7c72"/><stop offset="1" stop-color="#a29288"/></linearGradient><filter id="vb" x="-20%" y="-20%" width="140%" height="140%"><feGaussianBlur stdDeviation="1"/></filter></defs><rect x="536" y="322" width="60.600" height="99" fill="url(#vw)"/><g filter="url(#vb)"><path d="M551 372c-1-14 6-26 20-27.500 12-1 20 5 23 14l3 8v24l-12 4-20-6c-8-2-13-8-14-16.500z" fill="#86705c"/><path d="M552.500 368c0-8 4-14 10-15.500 6-1 12 1 14.500 6 2 6 2 14 0 20-2 6-6 9-11 9.500-5 0-9-2-11-6-2-4-2.500-9-2.500-14z" fill="#c2917e"/><path d="M552 362c3-8 10-12 18-11 6 1 10 5 11 10-6-3-12-4-18-2-4 1-8 2-11 3z" fill="#907a64"/><path d="M553 365.500h10l3-1h10" stroke="#5a4a44" stroke-width=".9" fill="none"/><path d="M576 366c4 6 5 14 2 22l10 4 6-10-2-16z" fill="#7a6654"/><path d="M536 397c4-4 10-7 18-9l6 2c6 2 14 2 20-1l8-3 8.600 3v32h-60.600z" fill="#2a2e2c"/><path d="M560 388c4 3 12 3 18 0l2 6c-6 3-14 3-20 0z" fill="#b48672"/><rect x="536" y="386" width="2" height="8" fill="#3a9a50"/></g><rect x="536" y="398" width="60.600" height="23" fill="#1c1e1e" opacity=".25"/></svg><div class="abs" style="left:0;top:0;width:124.5px;height:99px;border:3px solid #4e9bf2;border-radius:6.5px"></div><svg style="left:95.800px;top:9.300px" width="19.400" height="19.400" viewBox="0 0 19.400 19.400"><circle cx="9.700" cy="9.700" r="9.700" fill="#1a73e8"/><g stroke="#fff" stroke-width="2.500" stroke-linecap="round"><path d="M5 8.300v2.800M9.700 6.700v6M14.400 8.300v2.800"/></g></svg><div class="nm" style="letter-spacing:-0.17px">Eugenia Yablonov...</div></div>
<div class="tile" style="left:638.0px;top:322.0px;"><div class="av" style="background:#c341c0">Д</div><svg class="mic" viewBox="0 0 19 19"><circle cx="9.5" cy="9.5" r="9.5" fill="#2f3237"/><rect x="8.100" y="4.200" width="3" height="6" rx="1.500" fill="#f1f3f4"/><g fill="none" stroke="#f1f3f4" stroke-width="1.100" stroke-linecap="round"><path d="M6.200 9.200a3.400 3.400 0 0 0 6.800 0"/><path d="M9.600 12.800v2.200"/></g><path d="M4.300 4.600l10.300 10.200" stroke="#2c2f33" stroke-width="2.600"/><path d="M4.600 5.400l9.800 9.600" stroke="#f1f3f4" stroke-width="1.200" stroke-linecap="round"/></svg><div class="nm">Дмитро</div></div>
<div class="tile" style="left:771.3px;top:322.0px;"><div class="av" style="background:#5161c9">В</div><svg class="mic" viewBox="0 0 19 19"><circle cx="9.5" cy="9.5" r="9.5" fill="#2f3237"/><rect x="8.100" y="4.200" width="3" height="6" rx="1.500" fill="#f1f3f4"/><g fill="none" stroke="#f1f3f4" stroke-width="1.100" stroke-linecap="round"><path d="M6.200 9.200a3.400 3.400 0 0 0 6.800 0"/><path d="M9.600 12.800v2.200"/></g><path d="M4.300 4.600l10.300 10.200" stroke="#2c2f33" stroke-width="2.600"/><path d="M4.600 5.400l9.800 9.600" stroke="#f1f3f4" stroke-width="1.200" stroke-linecap="round"/></svg><div class="nm">Вадим Куріптя</div></div>
<div class="tile" style="left:504.0px;top:430.0px;"><div class="av" style="background:#f03d7a">O</div><svg class="mic" viewBox="0 0 19 19"><circle cx="9.5" cy="9.5" r="9.5" fill="#2f3237"/><rect x="8.100" y="4.200" width="3" height="6" rx="1.500" fill="#f1f3f4"/><g fill="none" stroke="#f1f3f4" stroke-width="1.100" stroke-linecap="round"><path d="M6.200 9.200a3.400 3.400 0 0 0 6.800 0"/><path d="M9.600 12.800v2.200"/></g><path d="M4.300 4.600l10.300 10.200" stroke="#2c2f33" stroke-width="2.600"/><path d="M4.600 5.400l9.800 9.600" stroke="#f1f3f4" stroke-width="1.200" stroke-linecap="round"/></svg><div class="nm">Oleksandr Demc...</div></div>
<div class="tile" style="left:638.0px;top:430.0px;"><div class="abs" style="left:39.700px;top:25.200px;width:23.600px;height:23.600px;border-radius:50%;overflow:hidden;background:linear-gradient(180deg,#b8a6a2 0,#c4aca6 40%,#9a9aa0 55%,#6c6058 70%,#8a6e54 100%)"><div class="abs" style="left:0;top:13px;width:10px;height:11px;background:#5c5048;border-radius:0 60% 0 0"></div><div class="abs" style="left:10.800px;top:4px;width:3.200px;height:15.500px;background:#dc3024;border-radius:1.500px 1.500px .5px .5px"></div></div><div class="abs" style="left:62.100px;top:25.400px;width:24px;height:24px;border-radius:50%;overflow:hidden;background:#202428;box-shadow:0 0 0 1.300px #3b3f43"><div class="abs" style="left:14px;top:2px;width:10px;height:14px;background:repeating-linear-gradient(180deg,#d8d8d8 0,#d8d8d8 2px,#202428 2px,#202428 5px);opacity:.8"></div><div class="abs" style="left:3px;top:16px;width:17px;height:10px;border-radius:50% 50% 0 0;background:#cfcfcf"></div><div class="abs" style="left:6.500px;top:5px;width:10.500px;height:13px;border-radius:45%;background:#d9b29a"></div><div class="abs" style="left:6.500px;top:4px;width:10.500px;height:5px;border-radius:50% 50% 20% 20%;background:#3a2e28"></div></div><div class="nm" style="left:0;width:124.5px;text-align:center;top:59.5px">Ще 2 особи</div></div>
<div class="tile" style="left:771.3px;top:430.0px;"><div class="av" style="background:#9b51d3">I</div><svg class="mic" viewBox="0 0 19 19"><circle cx="9.5" cy="9.5" r="9.5" fill="#2f3237"/><rect x="8.100" y="4.200" width="3" height="6" rx="1.500" fill="#f1f3f4"/><g fill="none" stroke="#f1f3f4" stroke-width="1.100" stroke-linecap="round"><path d="M6.200 9.200a3.400 3.400 0 0 0 6.800 0"/><path d="M9.600 12.800v2.200"/></g><path d="M4.300 4.600l10.300 10.200" stroke="#2c2f33" stroke-width="2.600"/><path d="M4.600 5.400l9.800 9.600" stroke="#f1f3f4" stroke-width="1.200" stroke-linecap="round"/></svg><div class="nm">Ірина Кирпичова</div></div>
<div class="abs" style="left:811.5px;top:533.3px;width:8px;height:4px;border-radius:2px;background:#3a3e42"></div><div class="abs" style="left:0;top:535.5px;width:900px;height:64.5px;background:#0b0c0e"></div>
</body></html>
